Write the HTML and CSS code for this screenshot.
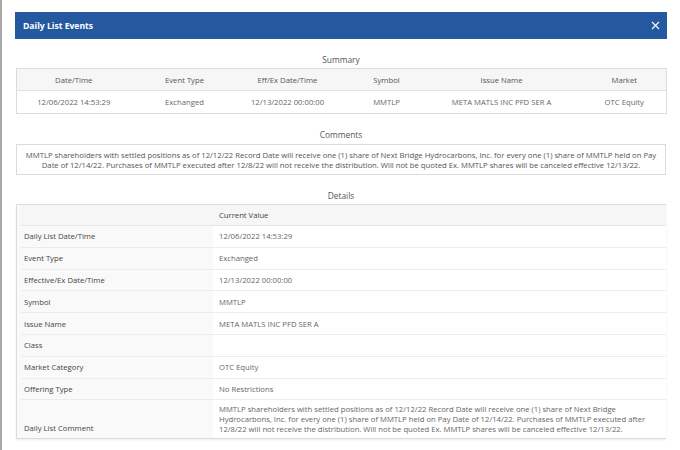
FILE: index.html
```html
<!DOCTYPE html>
<html>
<head>
<meta charset="utf-8">
<link rel="stylesheet" href="styles.css">
</head>
<body>
<div class="page">
  <div class="modal">
    <div class="modal-header">
      <span class="modal-title">Daily List Events</span>
      <svg class="close" width="9" height="9" viewBox="0 0 9 9"><path d="M1 1L8 8M8 1L1 8" stroke="#fff" stroke-width="1.1" fill="none"/></svg>
    </div>
    <div class="modal-body">
      <div class="section-title">Summary</div>
      <table class="summary">
        <colgroup>
          <col style="width:114px"><col style="width:108px"><col style="width:98px"><col style="width:100px"><col style="width:130px"><col style="width:100px">
        </colgroup>
        <thead>
          <tr><th>Date/Time</th><th>Event Type</th><th>Eff/Ex Date/Time</th><th>Symbol</th><th>Issue Name</th><th class="last">Market</th></tr>
        </thead>
        <tbody>
          <tr><td>12/06/2022 14:53:29</td><td>Exchanged</td><td>12/13/2022 00:00:00</td><td>MMTLP</td><td>META MATLS INC PFD SER A</td><td class="last">OTC Equity</td></tr>
        </tbody>
      </table>

      <div class="section-title comments-title">Comments</div>
      <div class="comments">MMTLP shareholders with settled positions as of 12/12/22 Record Date will receive one (1) share of Next Bridge Hydrocarbons, Inc. for every one (1) share of MMTLP held on Pay Date of 12/14/22. Purchases of MMTLP executed after 12/8/22 will not receive the distribution. Will not be quoted Ex. MMTLP shares will be canceled effective 12/13/22.</div>

      <div class="section-title details-title">Details</div>
      <div class="details-card">
        <table class="details">
          <thead>
            <tr><th class="lbl"></th><th>Current Value</th></tr>
          </thead>
          <tbody>
            <tr><td class="lbl">Daily List Date/Time</td><td>12/06/2022 14:53:29</td></tr>
            <tr><td class="lbl">Event Type</td><td>Exchanged</td></tr>
            <tr><td class="lbl">Effective/Ex Date/Time</td><td>12/13/2022 00:00:00</td></tr>
            <tr><td class="lbl">Symbol</td><td>MMTLP</td></tr>
            <tr><td class="lbl">Issue Name</td><td>META MATLS INC PFD SER A</td></tr>
            <tr><td class="lbl">Class</td><td></td></tr>
            <tr><td class="lbl">Market Category</td><td>OTC Equity</td></tr>
            <tr><td class="lbl">Offering Type</td><td>No Restrictions</td></tr>
            <tr class="multi"><td class="lbl">Daily List Comment</td><td>MMTLP shareholders with settled positions as of 12/12/22 Record Date will receive one (1) share of Next Bridge Hydrocarbons, Inc. for every one (1) share of MMTLP held on Pay Date of 12/14/22. Purchases of MMTLP executed after 12/8/22 will not receive the distribution. Will not be quoted Ex. MMTLP shares will be canceled effective 12/13/22.</td></tr>
          </tbody>
        </table>
      </div>
    </div>
  </div>
</div>
</body>
</html>
```

FILE: styles.css
```css
html, body {
  margin: 0;
  padding: 0;
  background: #fff;
}
body {
  font-family: "Open Sans", "Liberation Sans", sans-serif;
  color: #555;
  width: 680px;
  height: 450px;
  overflow: hidden;
}
.page {
  height: 450px;
  border-left: 2px solid #a9a9a9;
  box-sizing: border-box;
  padding: 12px 0 0 13px;
}
.modal {
  width: 652px;
}
.modal-header {
  height: 27px;
  background: #2459a0;
  display: flex;
  align-items: center;
  justify-content: space-between;
  padding: 0 7px 0 8px;
  box-sizing: border-box;
}
.modal-title {
  color: #fff;
  font-weight: 700;
  font-size: 8.6px;
}
.close {
  display: block;
}
.modal-body {
  padding: 0 1px;
}
.section-title {
  text-align: center;
  font-size: 8.4px;
  color: #555;
  line-height: 12px;
  margin-top: 15px;
  margin-bottom: 2px;
}
.comments-title { margin-top: 15px; margin-bottom: 3px; }
.details-title { margin-top: 15px; margin-bottom: 2px; }

table {
  border-collapse: collapse;
  border-spacing: 0;
}
.summary {
  width: 650px;
  table-layout: fixed;
  border: 1px solid #dcdcdc;
  font-size: 7.7px;
}
.summary th {
  background: #f6f6f6;
  font-weight: 400;
  color: #555;
  height: 21px;
  padding: 0;
  text-align: center;
  border-bottom: 1px solid #e2e2e2;
}
.summary td {
  height: 22px;
  padding: 0;
  text-align: center;
  color: #666;
}
.summary .last {
  padding-left: 16px;
}
.comments {
  width: 650px;
  box-sizing: border-box;
  border: 1px solid #dcdcdc;
  text-align: center;
  font-size: 7.7px;
  line-height: 10px;
  color: #555;
  padding: 5px 6px 4px;
}
.details-card {
  width: 650px;
  box-sizing: border-box;
  border: 1px solid #dcdcdc;
  background: #f9f9f9;
  padding-left: 4px;
  box-shadow: 0 1px 2px rgba(0,0,0,0.08);
}
.details {
  width: 645px;
  table-layout: fixed;
  font-size: 7.7px;
}
.details th {
  background: #f6f6f6;
  font-weight: 400;
  text-align: left;
  color: #444;
  height: 20px;
  padding: 0 0 0 6px;
  border-bottom: 1px solid #e6e6e6;
}
.details th.lbl { width: 186px; }
.details td {
  height: 20.8px;
  padding: 0 0 0 6px;
  text-align: left;
  color: #666;
  background: #fff;
  border-bottom: 1px solid #ececec;
}
.details td.lbl {
  background: #f9f9f9;
  color: #444;
  padding-left: 3px;
}
.details tr.multi td {
  border-bottom: none;
  line-height: 10px;
  height: 30px;
  vertical-align: bottom;
  padding-bottom: 4px;
  padding-top: 3px;
  padding-right: 12px;
}
.details tr.multi td.lbl {
  padding-bottom: 5px;
}
```
